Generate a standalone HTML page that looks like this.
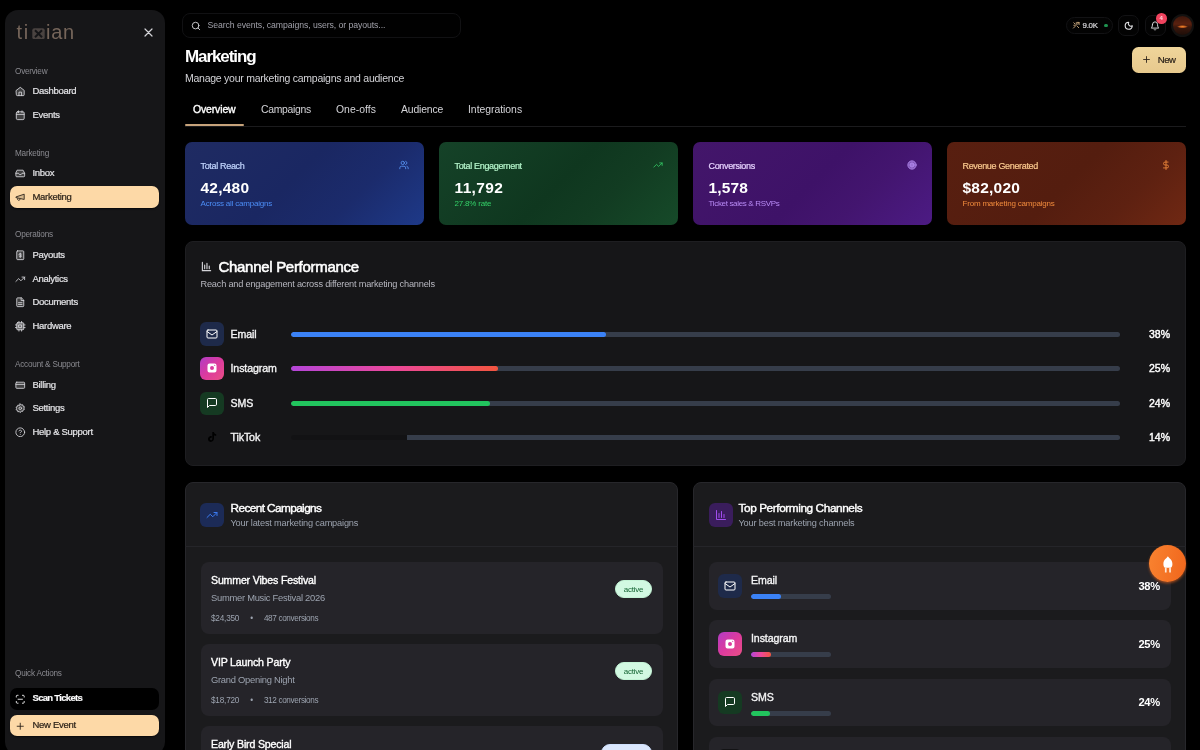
<!DOCTYPE html>
<html lang="en">
<head>
<meta charset="utf-8">
<title>Marketing</title>
<style>
*{box-sizing:border-box;margin:0;padding:0}
html,body{width:1200px;height:750px;overflow:hidden;background:#000;color:#fff;font-family:"Liberation Sans",sans-serif;}
body{position:relative;will-change:transform;-webkit-font-smoothing:antialiased}
.abs{position:absolute}
svg{display:block}
/* sidebar */
#sb{position:absolute;left:5px;top:10px;width:160px;height:745px;background:#161618;border-radius:13px}
.lbl{position:absolute;left:15px;font-size:8.2px;color:#8a8a90;letter-spacing:-0.22px;line-height:10px;white-space:nowrap}
.it{-webkit-text-stroke:.2px #e4e4e7;position:absolute;left:10px;width:149px;height:22px;border-radius:7px;font-size:9.5px;color:#e4e4e7;line-height:22px;white-space:nowrap;letter-spacing:-0.3px}
.it span{position:absolute;left:22.5px;top:0}
.it svg{position:absolute;left:5px;top:6px;width:10.5px;height:10.5px;stroke:#d4d4d8;fill:none;stroke-width:2;stroke-linecap:round;stroke-linejoin:round}
.it.act{background:#fdd9a7;color:#2a2118;box-shadow:0 1px 1.5px rgba(0,0,0,.6);-webkit-text-stroke:0.2px #2a2118}
.it.act svg{stroke:#2a2118}
.it.blk{background:#000;color:#fff;font-weight:700;letter-spacing:-0.7px}
.f{fill:#d4d4d8;fill-opacity:.22}
.it.act .f{fill:#2a2118;fill-opacity:.18}
</style>
</head>
<body>
<div id="sb"></div>
<!-- sidebar content -->
<div class="abs" id="logo" style="left:16.400px;top:20.800px;font-size:20px;line-height:22px;color:#75655a;letter-spacing:1.900px;white-space:nowrap">ti</div>
<div class="abs" style="left:45.900px;top:20.800px;font-size:20px;line-height:22px;color:#75655a;letter-spacing:0.800px;white-space:nowrap">ian</div>
<svg class="abs" style="left:32px;top:27.500px" width="13" height="11.500" viewBox="0 0 13 11.500"><rect x="0.300" y="0.300" width="12.400" height="10.900" rx="2" fill="#4a4340"/><path d="M3 2.200l7 7.100M10 2.200l-7 7.100" stroke="#151517" stroke-width="2"/></svg>
<svg class="abs" style="left:143.5px;top:27.5px" width="9" height="9" viewBox="0 0 9 9"><path d="M1 1l7 7M8 1l-7 7" stroke="#d4d4d8" stroke-width="1.2" stroke-linecap="round"/></svg>

<div class="lbl" style="top:67.0px">Overview</div>
<div class="it" style="top:80.3px"><svg viewBox="0 0 24 24"><path class="f" d="M3 10l9-7 9 7v10a2 2 0 0 1-2 2H5a2 2 0 0 1-2-2z"/><path d="M9 22v-8h6v8"/></svg><span>Dashboard</span></div>
<div class="it" style="top:104.0px"><svg viewBox="0 0 24 24"><rect class="f" x="3" y="4" width="18" height="18" rx="3"/><path d="M8 2v4M16 2v4M3 10h18"/></svg><span>Events</span></div>

<div class="lbl" style="top:148.7px">Marketing</div>
<div class="it" style="top:162.3px"><svg viewBox="0 0 24 24"><path d="M22 12h-6l-2 3h-4l-2-3H2"/><path class="f" d="M5.5 5h13l3.500 7v6a2 2 0 0 1-2 2H4a2 2 0 0 1-2-2v-6z"/></svg><span>Inbox</span></div>
<div class="it act" style="top:185.9px"><svg viewBox="0 0 24 24"><path class="f" d="M3 11l18-6v12L3 13z"/><path d="M11.600 16.800a3 3 0 1 1-5.800-1.600"/></svg><span>Marketing</span></div>

<div class="lbl" style="top:230.4px">Operations</div>
<div class="it" style="top:244.0px"><svg viewBox="0 0 24 24"><rect class="f" x="4" y="2" width="16" height="20" rx="2"/><path d="M12 7v10M15 9.500c-1-1.500-6-1.500-6 .7s6 1.300 6 3.600-5 2.200-6 .7"/></svg><span>Payouts</span></div>
<div class="it" style="top:267.7px"><svg viewBox="0 0 24 24"><path d="M22 7l-8.500 8.500-5-5L2 17"/><path d="M16 7h6v6"/></svg><span>Analytics</span></div>
<div class="it" style="top:291.4px"><svg viewBox="0 0 24 24"><path class="f" d="M14 2H6a2 2 0 0 0-2 2v16a2 2 0 0 0 2 2h12a2 2 0 0 0 2-2V8z"/><path d="M14 2v6h6M8 13h8M8 17h8"/></svg><span>Documents</span></div>
<div class="it" style="top:315.2px"><svg viewBox="0 0 24 24"><rect class="f" x="4" y="4" width="16" height="16" rx="2" style="fill-opacity:.45"/><rect x="9" y="9" width="6" height="6"/><path d="M9 1v3M15 1v3M9 20v3M15 20v3M20 9h3M20 15h3M1 9h3M1 15h3"/></svg><span>Hardware</span></div>

<div class="lbl" style="top:360.0px">Account &amp; Support</div>
<div class="it" style="top:373.5px"><svg viewBox="0 0 24 24"><rect class="f" x="2" y="5" width="20" height="14" rx="2"/><path d="M2 10h20"/></svg><span>Billing</span></div>
<div class="it" style="top:397.2px"><svg viewBox="0 0 24 24"><circle cx="12" cy="12" r="3"/><path class="f" d="M12 2l2.200 2.600 3.300-.600.900 3.200 3.100 1.300-1.200 3.100 1.200 3.100-3.100 1.300-.900 3.200-3.300-.600L12 22l-2.200-2.600-3.300.600-.900-3.200-3.100-1.300 1.200-3.100-1.200-3.100 3.100-1.300.900-3.200 3.300.600z"/></svg><span>Settings</span></div>
<div class="it" style="top:420.9px"><svg viewBox="0 0 24 24"><circle cx="12" cy="12" r="10"/><path d="M9.100 9a3 3 0 0 1 5.800 1c0 2-3 3-3 3M12 17h.01"/></svg><span>Help &amp; Support</span></div>

<div class="lbl" style="top:668.5px">Quick Actions</div>
<div class="it blk" style="top:688px;height:21.500px;line-height:20px"><svg viewBox="0 0 24 24" style="stroke:#fff"><path d="M3 7V5a2 2 0 0 1 2-2h2M17 3h2a2 2 0 0 1 2 2v2M21 17v2a2 2 0 0 1-2 2h-2M7 21H5a2 2 0 0 1-2-2v-2M7 12h10"/></svg><span>Scan Tickets</span></div>
<div class="it act" style="top:714.500px;height:21.500px;line-height:20px"><svg viewBox="0 0 24 24"><path d="M12 5v14M5 12h14"/></svg><span>New Event</span></div>

<style>
/* topbar */
#search{position:absolute;left:182px;top:13px;width:279px;height:24.5px;border:1px solid #111113;border-radius:8px;background:#010101}
#search span{position:absolute;left:24.5px;top:0;line-height:22.5px;font-size:8.7px;color:#a1a1aa;letter-spacing:-0.07px;white-space:nowrap}
.tb{position:absolute;border:1px solid #121214;background:#030303}
h1{position:absolute;left:185px;top:46px;font-size:17px;line-height:22px;font-weight:700;letter-spacing:-1.09px;white-space:nowrap}
#sub{position:absolute;left:185px;top:71.5px;font-size:10.5px;line-height:13px;color:#d4d4d8;letter-spacing:-0.25px;white-space:nowrap}
.tab{position:absolute;top:102.5px;font-size:10.4px;line-height:13px;color:#d4d4d8;letter-spacing:-0.3px;white-space:nowrap}
/* stat cards */
.st{position:absolute;top:142.4px;width:239px;height:83px;border-radius:7px;overflow:hidden}
.st .a{-webkit-text-stroke:.2px currentColor;position:absolute;left:15.5px;top:17.2px;font-size:9px;line-height:12px;letter-spacing:-0.33px;white-space:nowrap}
.st .b{position:absolute;left:15.5px;top:36.5px;font-size:15.5px;line-height:18px;font-weight:700;letter-spacing:0.22px;white-space:nowrap;color:#fff}
.st .c{position:absolute;left:15.5px;top:56.5px;font-size:8px;line-height:10px;letter-spacing:-0.2px;white-space:nowrap}
.st svg{position:absolute;right:15.5px;top:17.6px;width:10px;height:10px;fill:none;stroke-width:2;stroke-linecap:round;stroke-linejoin:round}
/* cards */
.card{position:absolute;background:#161618;border-radius:8px;border:1px solid #1e1e21;overflow:hidden}
.ib{position:absolute;width:23.5px;height:23.5px;border-radius:6px}
.ib svg{position:absolute;left:5.75px;top:5.75px;width:12px;height:12px;fill:none;stroke:#fff;stroke-width:2;stroke-linecap:round;stroke-linejoin:round}
.row .n{position:absolute;left:230.5px;font-size:10.6px;line-height:13px;font-weight:400;letter-spacing:-0.1px;white-space:nowrap;color:#f4f4f5;-webkit-text-stroke:.35px #f4f4f5}
.trk{position:absolute;left:291px;width:829px;height:5px;border-radius:3px;background:#363d4a;overflow:hidden}
.trk i{position:absolute;left:0;top:0;height:100%;border-radius:3px}
.pc{position:absolute;font-size:10.5px;line-height:13px;font-weight:400;letter-spacing:0;-webkit-text-stroke:.4px #fff;white-space:nowrap;color:#fff;text-align:right}
.ct{position:absolute;font-size:11.8px;line-height:14px;font-weight:400;letter-spacing:-0.59px;white-space:nowrap;color:#fff;-webkit-text-stroke:.4px #fff}
.cs{position:absolute;font-size:9.2px;line-height:11px;letter-spacing:-0.17px;white-space:nowrap;color:#9ca3af}
.cmp{position:absolute;left:200.5px;width:462px;height:71.5px;border-radius:8px;background:#252429}
.cmp .t{position:absolute;left:10.5px;top:12px;font-size:10.6px;line-height:13px;font-weight:400;letter-spacing:-0.18px;white-space:nowrap;color:#fff;-webkit-text-stroke:.35px #fff}
.cmp .s{position:absolute;left:10.5px;top:29.5px;font-size:9.4px;line-height:12px;letter-spacing:-0.27px;white-space:nowrap;color:#9ca3af}
.cmp .m{position:absolute;left:10.5px;top:51.5px;font-size:8.2px;line-height:10px;letter-spacing:-0.2px;white-space:nowrap;color:#9ca3af}
.bdg{position:absolute;right:10.5px;top:18px;width:37px;height:17.5px;border-radius:9px;background:#d2f9e2;color:#166534;font-size:8px;line-height:17.5px;text-align:center;letter-spacing:-0.2px;border:1px solid #c4f3d6}
.ch{position:absolute;left:709px;width:461.5px;height:47.5px;border-radius:8px;background:#252429}
.ch .n{position:absolute;left:42px;top:12px;font-size:10.6px;line-height:13px;font-weight:400;letter-spacing:-0.1px;white-space:nowrap;color:#f4f4f5;-webkit-text-stroke:.35px #f4f4f5}
.ch .trk{left:42px;top:32.2px;width:80px}
.ch .pc{right:10.5px;top:17.5px;font-size:11.2px;letter-spacing:-0.27px;font-weight:700;-webkit-text-stroke:0}
.ch .ib{left:9px;top:12px}
</style>

<!-- topbar -->
<div id="search"><svg class="abs" style="left:7.5px;top:6.5px" width="10" height="10" viewBox="0 0 24 24" fill="none" stroke="#d4d4d8" stroke-width="2.2" stroke-linecap="round"><circle cx="11" cy="11" r="8"/><path d="M21 21l-4.300-4.300"/></svg><span>Search events, campaigns, users, or payouts...</span></div>

<div class="tb" style="left:1065.5px;top:16.800px;width:47.5px;height:17.500px;border-radius:9px">
 <svg class="abs" style="left:5px;top:3.500px" width="8.500" height="8.500" viewBox="0 0 24 24" fill="none" stroke="#c9a77c" stroke-width="2.6" stroke-linecap="round" stroke-linejoin="round"><path d="M4 20L20 4M14 4h6v6M5 5l4 4M15 15l4 4M5 12h3M12 5v3"/></svg>
 <span class="abs" style="left:16px;top:0;line-height:16px;font-size:7.900px;color:#d8d8dc;letter-spacing:-0.250px;-webkit-text-stroke:.2px #d8d8dc">9.0K</span>
 <span class="abs" style="left:37.800px;top:6px;width:3.5px;height:3.5px;border-radius:50%;background:#1f9450"></span>
</div>
<div class="tb" style="left:1118px;top:14.5px;width:21px;height:21px;border-radius:7px"><svg class="abs" style="left:5px;top:5px" width="9.500" height="9.500" viewBox="0 0 24 24" fill="none" stroke="#e4e4e7" stroke-width="2.800" stroke-linecap="round" stroke-linejoin="round"><path d="M12 3a6.500 6.500 0 0 0 9 9 9 9 0 1 1-9-9z"/></svg></div>
<div class="tb" style="left:1144.500px;top:14.5px;width:21px;height:21px;border-radius:7px"><svg class="abs" style="left:4.500px;top:5px" width="10" height="10" viewBox="0 0 24 24" fill="none" stroke="#e4e4e7" stroke-width="2.200" stroke-linecap="round" stroke-linejoin="round"><path d="M6 8a6 6 0 0 1 12 0c0 7 3 9 3 9H3s3-2 3-9"/><path d="M10.300 21a1.940 1.940 0 0 0 3.400 0"/></svg></div>
<div class="abs" style="left:1156px;top:13px;width:10.500px;height:10.500px;border-radius:50%;background:#f0435e;color:#ffd5dc;font-size:6px;line-height:10.500px;text-align:center;font-weight:700">4</div>
<div class="abs" style="left:1170.500px;top:13.500px;width:23.500px;height:23.500px;border-radius:50%;border:2px solid #121110;background:radial-gradient(ellipse 5.500px 1.500px at 50% 56%,#f08a2c 0,#b9551b 60%,rgba(150,60,20,0) 100%),linear-gradient(#3c160b 0%,#5a210f 42%,#3a170c 58%,#1f0e08 100%)"></div>

<h1>Marketing</h1>
<div id="sub">Manage your marketing campaigns and audience</div>
<div class="abs" style="left:1132px;top:47px;width:54px;height:26px;border-radius:6.500px;background:linear-gradient(#efd59a,#e7c98d)">
 <svg class="abs" style="left:11.200px;top:9.300px" width="7" height="7" viewBox="0 0 24 24" fill="none" stroke="#2a2118" stroke-width="3" stroke-linecap="round"><path d="M12 2v20M2 12h20"/></svg>
 <span class="abs" style="left:25.800px;top:0;line-height:25.500px;font-size:9.600px;color:#2a2118;letter-spacing:-0.500px;-webkit-text-stroke:.2px #2a2118">New</span>
</div>

<div class="tab" style="left:193px;color:#fff;font-size:10.5px;letter-spacing:-0.16px;-webkit-text-stroke:.35px #fff">Overview</div>
<div class="tab" style="left:261px">Campaigns</div>
<div class="tab" style="left:336px;letter-spacing:0.04px">One-offs</div>
<div class="tab" style="left:401px;letter-spacing:-0.16px">Audience</div>
<div class="tab" style="left:468px;letter-spacing:-0.02px">Integrations</div>
<div class="abs" style="left:185px;top:126px;width:1001px;height:1px;background:#1b1b1d"></div>
<div class="abs" style="left:185px;top:124.300px;width:58.500px;height:2px;background:#c6a27a;border-radius:1px"></div>

<!-- stats -->
<div class="st" style="left:185px;background:linear-gradient(135deg,#1f2b62 0%,#1a2762 45%,#1b2b6c 70%,#1e3988 100%)"><div class="a" style="color:#c3d6ff">Total Reach</div><div class="b">42,480</div><div class="c" style="color:#4c8df6">Across all campaigns</div>
<svg viewBox="0 0 24 24" style="stroke:#5a96f5"><path d="M16 21v-2a4 4 0 0 0-4-4H6a4 4 0 0 0-4 4v2"/><circle cx="9" cy="7" r="4"/><path d="M22 21v-2a4 4 0 0 0-3-3.870M16 3.130a4 4 0 0 1 0 7.750"/></svg></div>
<div class="st" style="left:439px;background:linear-gradient(135deg,#154228 0%,#0f371f 50%,#123c22 70%,#164a29 100%)"><div class="a" style="color:#b5f5cb">Total Engagement</div><div class="b" style="letter-spacing:.36px">11,792</div><div class="c" style="color:#34d068">27.8% rate</div>
<svg viewBox="0 0 24 24" style="stroke:#34c865"><path d="M22 7l-8.500 8.500-5-5L2 17"/><path d="M16 7h6v6"/></svg></div>
<div class="st" style="left:693px;background:linear-gradient(135deg,#43166a 0%,#3e1268 50%,#43156f 70%,#4c1b84 100%)"><div class="a" style="color:#e6d3ff">Conversions</div><div class="b" style="letter-spacing:.15px">1,578</div><div class="c" style="color:#b88af5;letter-spacing:-.33px">Ticket sales &amp; RSVPs</div>
<svg viewBox="0 0 24 24" style="stroke:#b58cf0;fill:#b58cf0;fill-opacity:.55"><circle cx="12" cy="12" r="10"/><circle cx="12" cy="12" r="5"/></svg></div>
<div class="st" style="left:947px;background:linear-gradient(135deg,#581f10 0%,#541d0f 50%,#5e2111 75%,#702813 100%)"><div class="a" style="color:#fbc98e">Revenue Generated</div><div class="b">$82,020</div><div class="c" style="color:#f08a3c">From marketing campaigns</div>
<svg viewBox="0 0 24 24" style="stroke:#f08a3c"><path d="M12 1v22M17 5H9.500a3.500 3.500 0 0 0 0 7h5a3.500 3.500 0 0 1 0 7H6"/></svg></div>

<!-- channel performance -->
<div class="card" style="left:185px;top:241px;width:1001px;height:224.500px"></div>
<svg class="abs" style="left:201px;top:260.800px" width="11" height="11" viewBox="0 0 24 24" fill="none" stroke="#d4d4d8" stroke-width="2.500" stroke-linecap="round"><path d="M3 3v18h18M8 17V9M13 17V5M18 17v-6"/></svg>
<div class="abs" style="left:218.500px;top:256.500px;font-size:15px;line-height:19px;font-weight:400;letter-spacing:-0.300px;white-space:nowrap;-webkit-text-stroke:.55px #fff">Channel Performance</div>
<div class="abs" style="left:200.500px;top:279px;font-size:9.200px;line-height:11px;color:#b8b8c0;letter-spacing:-0.200px;white-space:nowrap">Reach and engagement across different marketing channels</div>

<div class="row">
 <div class="ib" style="left:200px;top:322px;background:#1e2a4a"><svg viewBox="0 0 24 24"><rect x="2" y="4" width="20" height="16" rx="2"/><path d="M22 7l-10 7L2 7"/></svg></div>
 <div class="n" style="top:327.500px">Email</div><div class="trk" style="top:332px"><i style="width:38%;background:#3b82f6"></i></div><div class="pc" style="left:1140px;width:30px;top:327.500px">38%</div>
 <div class="ib" style="left:200px;top:356.500px;background:linear-gradient(135deg,#b03cc6 0%,#dc3a9e 50%,#ea4f86 100%)"><svg viewBox="0 0 24 24" style="fill:#fff;stroke:none"><path fill-rule="evenodd" d="M7 3h10a4 4 0 0 1 4 4v10a4 4 0 0 1-4 4H7a4 4 0 0 1-4-4V7a4 4 0 0 1 4-4zm5 5a4 4 0 1 0 0 8 4 4 0 0 0 0-8zm5.500-2.500a1.200 1.200 0 1 0 0 2.400 1.200 1.200 0 0 0 0-2.400z"/></svg></div>
 <div class="n" style="top:362px">Instagram</div><div class="trk" style="top:366.400px"><i style="width:25%;background:linear-gradient(90deg,#b445d8,#ec4899 50%,#f2553f)"></i></div><div class="pc" style="left:1140px;width:30px;top:362px">25%</div>
 <div class="ib" style="left:200px;top:391.500px;background:#153a22"><svg viewBox="0 0 24 24"><path d="M21 15a2 2 0 0 1-2 2H7l-4 4V5a2 2 0 0 1 2-2h14a2 2 0 0 1 2 2z"/></svg></div>
 <div class="n" style="top:396.500px">SMS</div><div class="trk" style="top:400.700px"><i style="width:24%;background:#22c55e"></i></div><div class="pc" style="left:1140px;width:30px;top:396.500px">24%</div>
 <div class="ib" style="left:200px;top:425.500px"><svg viewBox="0 0 24 24" style="fill:#000;stroke:none"><path d="M16 2c.300 2.600 1.800 4.200 4.400 4.400v3.300c-1.600.1-3-.4-4.400-1.300v6.300c0 7.600-8.600 9.300-11.300 4.200C2.600 14.500 6 9.500 11.500 10.200v3.400c-2.600-.5-4.300 1.600-3.500 3.600 1 2.500 4.600 1.700 4.600-1.300V2z"/></svg></div>
 <div class="n" style="top:431px">TikTok</div><div class="trk" style="top:435px;background:linear-gradient(90deg,#121214 14%,#363d4a 14%)"></div><div class="pc" style="left:1140px;width:30px;top:431px">14%</div>
</div>

<!-- recent campaigns -->
<div class="card" style="left:185px;top:481.500px;width:493px;height:300px;background:#1b1b1d;border-color:#27272b"></div>
<div class="abs" style="left:185px;top:546px;width:493px;height:1px;background:#252529"></div>
<div class="ib" style="left:200px;top:503px;background:#1c2b57"><svg viewBox="0 0 24 24" style="stroke:#3b7bf2"><path d="M22 7l-8.500 8.500-5-5L2 17"/><path d="M16 7h6v6"/></svg></div>
<div class="ct" style="left:230.500px;top:500.500px">Recent Campaigns</div>
<div class="cs" style="left:230.500px;top:518px">Your latest marketing campaigns</div>

<div class="cmp" style="top:562px"><div class="t">Summer Vibes Festival</div><div class="s">Summer Music Festival 2026</div><div class="m">$24,350<span style="margin:0 11px">•</span><span style="letter-spacing:-.35px">487 conversions</span></div><div class="bdg">active</div></div>
<div class="cmp" style="top:644.200px"><div class="t">VIP Launch Party</div><div class="s">Grand Opening Night</div><div class="m">$18,720<span style="margin:0 11px">•</span><span style="letter-spacing:-.35px">312 conversions</span></div><div class="bdg">active</div></div>
<div class="cmp" style="top:726.400px"><div class="t">Early Bird Special</div><div class="s">Spring Concert Series</div><div class="m">$12,480<span style="margin:0 11px">•</span><span style="letter-spacing:-.35px">198 conversions</span></div><div class="bdg" style="background:#dbe7fd;color:#1d4ed8;border-color:#cfe0fd;width:51px">completed</div></div>

<!-- top channels -->
<div class="card" style="left:693px;top:481.500px;width:493px;height:300px;background:#1b1b1d;border-color:#27272b"></div>
<div class="abs" style="left:693px;top:546px;width:493px;height:1px;background:#252529"></div>
<div class="ib" style="left:709px;top:503px;background:#3a1d5c"><svg viewBox="0 0 24 24" style="stroke:#a24df0"><path d="M3 3v18h18M8 17V9M13 17V5M18 17v-6"/></svg></div>
<div class="ct" style="left:738.500px;top:500.500px;letter-spacing:-.41px">Top Performing Channels</div>
<div class="cs" style="left:738.500px;top:518px">Your best marketing channels</div>

<div class="ch" style="top:562px"><div class="ib" style="background:#1e2a4a"><svg viewBox="0 0 24 24"><rect x="2" y="4" width="20" height="16" rx="2"/><path d="M22 7l-10 7L2 7"/></svg></div><div class="n">Email</div><div class="trk"><i style="width:38%;background:#3b82f6"></i></div><div class="pc">38%</div></div>
<div class="ch" style="top:620.250px"><div class="ib" style="background:linear-gradient(135deg,#b03cc6 0%,#dc3a9e 50%,#ea4f86 100%)"><svg viewBox="0 0 24 24" style="fill:#fff;stroke:none"><path fill-rule="evenodd" d="M7 3h10a4 4 0 0 1 4 4v10a4 4 0 0 1-4 4H7a4 4 0 0 1-4-4V7a4 4 0 0 1 4-4zm5 5a4 4 0 1 0 0 8 4 4 0 0 0 0-8zm5.500-2.500a1.200 1.200 0 1 0 0 2.400 1.200 1.200 0 0 0 0-2.400z"/></svg></div><div class="n">Instagram</div><div class="trk"><i style="width:25%;background:linear-gradient(90deg,#b445d8,#ec4899 50%,#f2553f)"></i></div><div class="pc">25%</div></div>
<div class="ch" style="top:678.500px"><div class="ib" style="background:#153a22"><svg viewBox="0 0 24 24"><path d="M21 15a2 2 0 0 1-2 2H7l-4 4V5a2 2 0 0 1 2-2h14a2 2 0 0 1 2 2z"/></svg></div><div class="n">SMS</div><div class="trk"><i style="width:24%;background:#22c55e"></i></div><div class="pc">24%</div></div>
<div class="ch" style="top:736.750px"><div class="ib" style="background:#131315"></div><div class="n">TikTok</div><div class="trk" style="background:linear-gradient(90deg,#121214 14%,#363d4a 14%)"></div><div class="pc">14%</div></div>

<!-- floating button -->
<div class="abs" style="left:1149.300px;top:545.200px;width:37px;height:37px;border-radius:50%;background:linear-gradient(100deg,#f98330,#f0661c);box-shadow:0 1.500px 2.500px rgba(240,100,26,.55)">
<svg class="abs" style="left:12.600px;top:10.800px" width="11.800" height="17.200" viewBox="0 0 11 16"><path d="M5.500 0.300C6 1.800 9.700 3 9.700 7.500 9.700 9.500 9 10.600 8.300 11H2.700C2 10.600 1.300 9.500 1.300 7.500 1.300 3 5 1.800 5.500 0.300z" fill="#fff"/><path d="M2.700 11h1.600v4.300H2.700zM6.700 11h1.600v4.300H6.700z" fill="#ffe9d6"/></svg>
</div>

</body>
</html>
